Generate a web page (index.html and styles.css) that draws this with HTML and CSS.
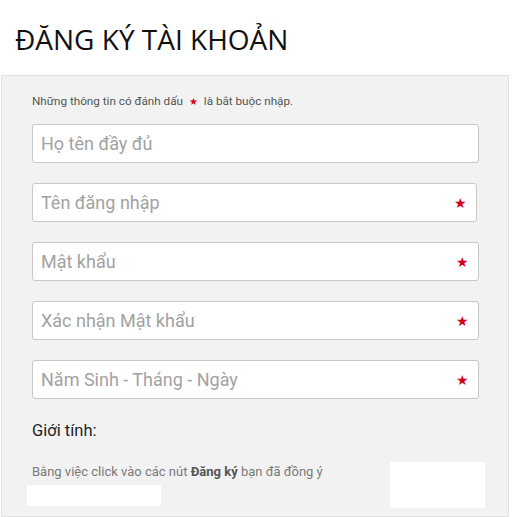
FILE: index.html
```html
<!DOCTYPE html>
<html lang="vi">
<head>
<meta charset="utf-8">
<title>Đăng ký tài khoản</title>
<link rel="stylesheet" href="styles.css">
</head>
<body>
<h1 class="title">ĐĂNG KÝ TÀI KHOẢN</h1>
<div class="panel">
  <p class="hint">Những thông tin có đánh dấu <span class="star-inline">★</span> là bắt buộc nhập.</p>
  <div class="fields">
    <div class="field"><span class="ph">Họ tên đầy đủ</span></div>
    <div class="field narrow"><span class="ph">Tên đăng nhập</span><span class="star">★</span></div>
    <div class="field"><span class="ph">Mật khẩu</span><span class="star">★</span></div>
    <div class="field"><span class="ph">Xác nhận Mật khẩu</span><span class="star">★</span></div>
    <div class="field"><span class="ph">Năm Sinh - Tháng - Ngày</span><span class="star">★</span></div>
  </div>
  <div class="gender">Giới tính:</div>
  <p class="terms">Bằng việc click vào các nút <b>Đăng ký</b> bạn đã đồng ý</p>
  <div class="mask mask-a"></div>
  <div class="mask mask-b"></div>
</div>
</body>
</html>
```
FILE: styles.css
```css
html, body {
  margin: 0;
  padding: 0;
  background: #fff;
  font-family: Roboto, "Liberation Sans", sans-serif;
}
body {
  width: 512px;
  height: 517px;
  overflow: hidden;
}
.title {
  margin: 0;
  padding: 19px 0 0 15px;
  height: 54px;
  box-sizing: border-box;
  font-family: "Open Sans", "DejaVu Sans", sans-serif;
  font-weight: 400;
  font-size: 28px;
  line-height: 40px;
  color: #111;
}
.panel {
  position: relative;
  margin: 21px 0 0 1px;
  width: 508px;
  height: 442px;
  box-sizing: border-box;
  background: #f2f2f2;
  border: 1px solid #e2e2e2;
  padding: 17px 30px 0 30px;
}
.hint {
  margin: 0;
  font-size: 11.7px;
  line-height: 17px;
  color: #555;
}
.star-inline {
  color: #d0021b;
  font-size: 10px;
  margin: 0 3px 0 3px;
}
.fields {
  margin-top: 14px;
  display: flex;
  flex-direction: column;
  gap: 20px;
}
.field {
  height: 39px;
  width: 447px;
  box-sizing: border-box;
  background: #fff;
  border: 1px solid #c8c8c8;
  border-radius: 3px;
  display: flex;
  align-items: center;
  justify-content: space-between;
  padding: 0 9px 0 8px;
}
.field.narrow {
  width: 445px;
}
.ph {
  font-size: 18px;
  color: #a2a2a2;
}
.star {
  color: #d0021b;
  font-size: 14px;
  line-height: 1;
}
.gender {
  margin-top: 22px;
  font-size: 16.5px;
  line-height: 20px;
  color: #222;
}
.terms {
  margin: 22px 0 0 0;
  font-size: 13px;
  line-height: 18px;
  color: #7a7a7a;
}
.terms b {
  color: #555;
}
.mask {
  position: absolute;
  background: #fff;
}
.mask-a {
  left: 25px;
  top: 409px;
  width: 134px;
  height: 21px;
}
.mask-b {
  left: 388px;
  top: 386px;
  width: 95px;
  height: 46px;
}
```
